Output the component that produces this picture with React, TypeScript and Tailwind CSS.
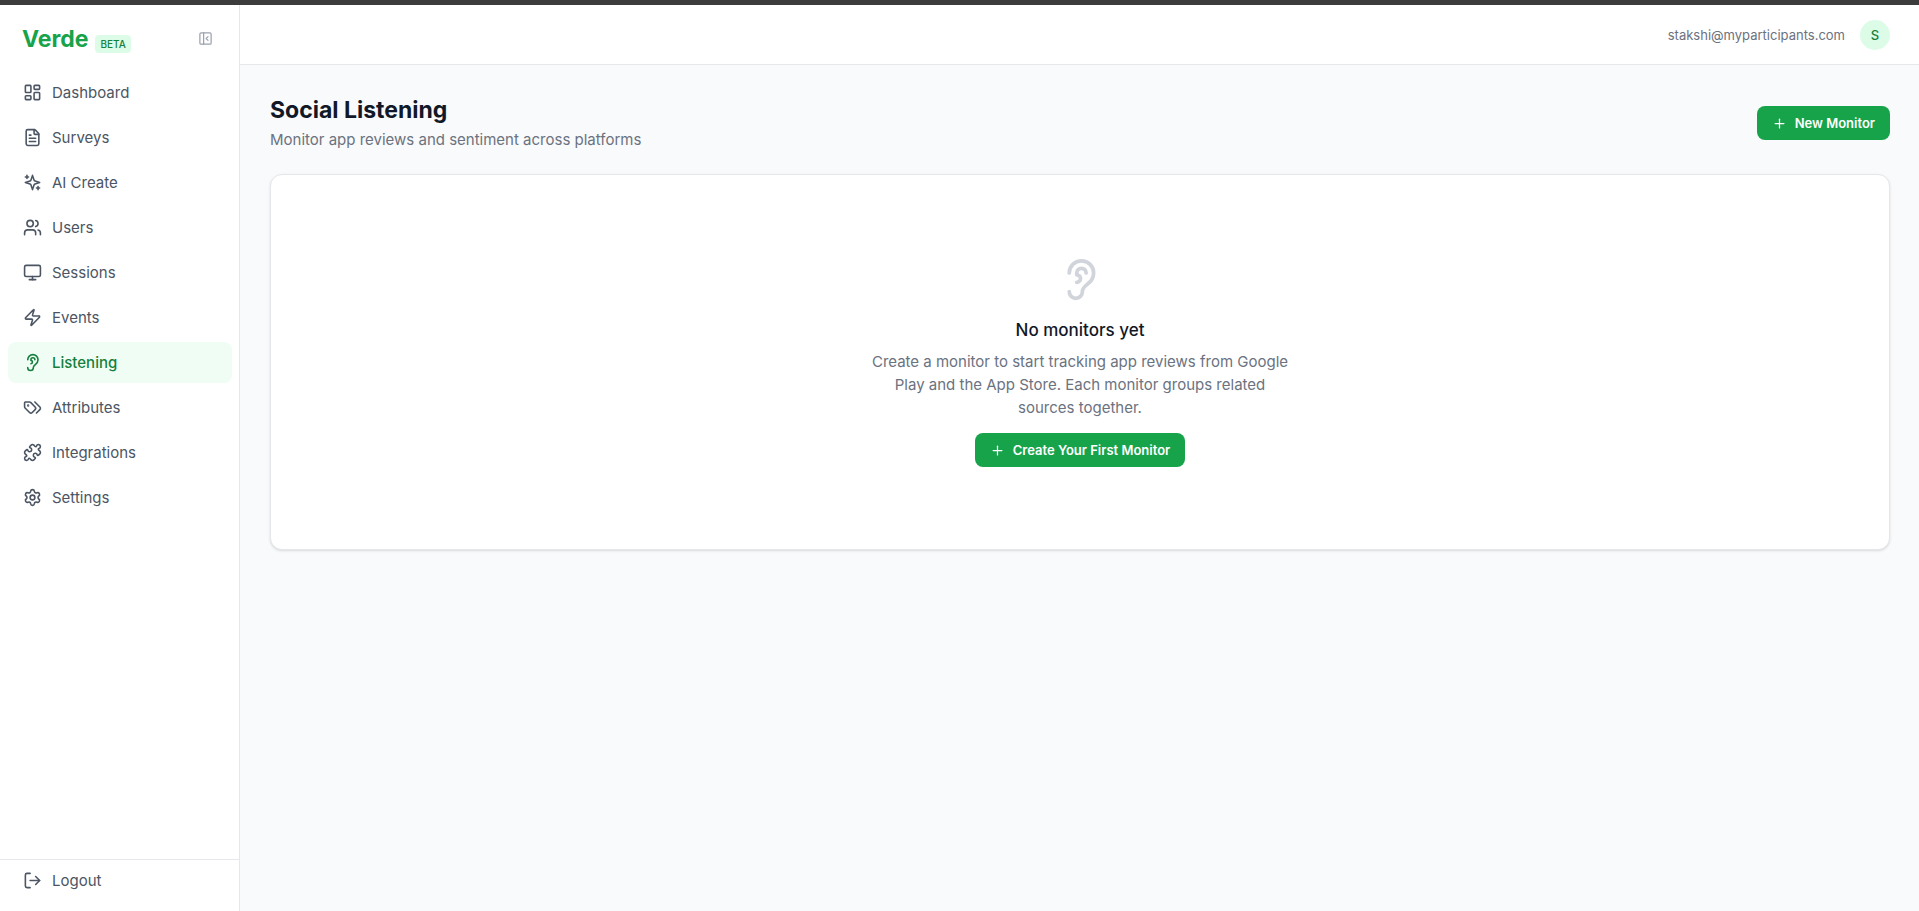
import {
  Ear,
  FileText,
  LayoutDashboard,
  LogOut,
  Monitor,
  PanelLeftClose,
  Plus,
  Puzzle,
  Settings,
  Users,
  Zap,
  createLucideIcon,
  type LucideIcon,
} from 'lucide-react'

const Sparkles = createLucideIcon('sparkles', [
  [
    'path',
    {
      d: 'm12 3-1.912 5.813a2 2 0 0 1-1.275 1.275L3 12l5.813 1.912a2 2 0 0 1 1.275 1.275L12 21l1.912-5.813a2 2 0 0 1 1.275-1.275L21 12l-5.813-1.912a2 2 0 0 1-1.275-1.275L12 3Z',
      key: 'star',
    },
  ],
  ['path', { d: 'M5 3v4', key: 'tl-v' }],
  ['path', { d: 'M3 5h4', key: 'tl-h' }],
  ['path', { d: 'M19 17v4', key: 'br-v' }],
  ['path', { d: 'M17 19h4', key: 'br-h' }],
])

const Tags = createLucideIcon('tags', [
  ['path', { d: 'm15 5 6.3 6.3a2.4 2.4 0 0 1 0 3.4L17 19', key: 'back' }],
  [
    'path',
    {
      d: 'M9.586 5.586A2 2 0 0 0 8.172 5H3a1 1 0 0 0-1 1v5.172a2 2 0 0 0 .586 1.414L8.29 18.29a2.426 2.426 0 0 0 3.42 0l3.58-3.58a2.426 2.426 0 0 0 0-3.42z',
      key: 'front',
    },
  ],
  ['circle', { cx: '6.5', cy: '9.5', r: '.5', fill: 'currentColor', key: 'hole' }],
])

interface NavItem {
  label: string
  icon: LucideIcon
}

const NAV_ITEMS: NavItem[] = [
  { label: 'Dashboard', icon: LayoutDashboard },
  { label: 'Surveys', icon: FileText },
  { label: 'AI Create', icon: Sparkles },
  { label: 'Users', icon: Users },
  { label: 'Sessions', icon: Monitor },
  { label: 'Events', icon: Zap },
  { label: 'Listening', icon: Ear },
  { label: 'Attributes', icon: Tags },
  { label: 'Integrations', icon: Puzzle },
  { label: 'Settings', icon: Settings },
]

function NavLink({ item, active }: { item: NavItem; active: boolean }) {
  const Icon = item.icon
  return (
    <a
      href="#"
      aria-current={active ? 'page' : undefined}
      className={
        active
          ? 'flex h-[41px] items-center gap-[10px] rounded-lg bg-[#f0fdf4] px-[15px] font-medium text-[#15803d]'
          : 'flex h-[41px] items-center gap-[10px] rounded-lg px-[15px] text-[#4b5563] hover:bg-[#f9fafb]'
      }
    >
      <Icon size={19} />
      {item.label}
    </a>
  )
}

function Sidebar() {
  return (
    <aside className="flex w-60 shrink-0 flex-col border-r border-[#e5e7eb] bg-white">
      {/* Brand */}
      <div className="flex h-[67px] items-center justify-between pr-[26px] pl-[22px]">
        <div className="flex items-center gap-[7px]">
          <span className="text-[23px] leading-[30px] font-bold text-[#16a34a]">Verde</span>
          <span className="mt-[10px] rounded bg-[#dcfce7] px-[5px] text-[10px] leading-[18px] font-medium text-[#15803d]">
            BETA
          </span>
        </div>
        <button type="button" aria-label="Collapse sidebar" className="text-[#9ca3af]">
          <PanelLeftClose size={15} />
        </button>
      </div>

      {/* Navigation */}
      <nav className="flex flex-1 flex-col gap-1 pr-[7px] pl-2">
        {NAV_ITEMS.map((item) => (
          <NavLink key={item.label} item={item} active={item.label === 'Listening'} />
        ))}
      </nav>

      {/* Logout */}
      <div className="border-t border-[#e5e7eb] pr-[7px] pb-[10px] pl-2">
        <button
          type="button"
          className="flex h-[41px] w-full items-center gap-[10px] rounded-lg px-[15px] text-[#4b5563]"
        >
          <LogOut size={19} />
          Logout
        </button>
      </div>
    </aside>
  )
}

function PrimaryButton({ label }: { label: string }) {
  return (
    <button
      type="button"
      className="inline-flex h-[34px] items-center gap-2 rounded-lg bg-[#16a34a] px-[15px] text-[13px] font-semibold text-white hover:bg-[#15803d]"
    >
      <Plus size={15} />
      {label}
    </button>
  )
}

function EmptyState() {
  return (
    <section className="flex flex-col items-center rounded-xl border border-[#e5e7eb] bg-white px-6 py-[82px] text-center shadow-sm">
      <Ear size={45} className="text-[#d1d5db]" />
      <h2 className="mt-[15px] text-[17px] leading-[26px] font-medium text-[#111827]">No monitors yet</h2>
      <p className="mt-[7px] mb-[14px] max-w-[420px] leading-[23px] text-[#6b7280]">
        Create a monitor to start tracking app reviews from Google Play and the App Store. Each monitor groups related
        sources together.
      </p>
      <PrimaryButton label="Create Your First Monitor" />
    </section>
  )
}

export default function App() {
  return (
    <div className="flex min-h-screen flex-col border-t-[5px] border-[#3c3c3c] bg-[#f9fafb] font-[Inter,sans-serif] text-[15px] leading-[22px] text-[#111827]">
      <div className="flex flex-1">
        <Sidebar />
        <div className="flex min-w-0 flex-1 flex-col">
          <header className="flex h-[60px] items-center justify-end gap-[15px] border-b border-[#e5e7eb] bg-white px-[29px]">
            <span className="text-[13px] text-[#6b7280]">stakshi@myparticipants.com</span>
            <span className="flex size-[30px] items-center justify-center rounded-full bg-[#dcfce7] text-[13px] font-medium text-[#15803d]">
              S
            </span>
          </header>

          <main className="p-[30px] pr-[29px]">
            <div className="mb-[23px] flex items-center justify-between">
              <div>
                <h1 className="text-[23px] leading-[30px] font-bold">Social Listening</h1>
                <p className="mt-1 text-[#6b7280]">Monitor app reviews and sentiment across platforms</p>
              </div>
              <PrimaryButton label="New Monitor" />
            </div>
            <EmptyState />
          </main>
        </div>
      </div>
    </div>
  )
}
